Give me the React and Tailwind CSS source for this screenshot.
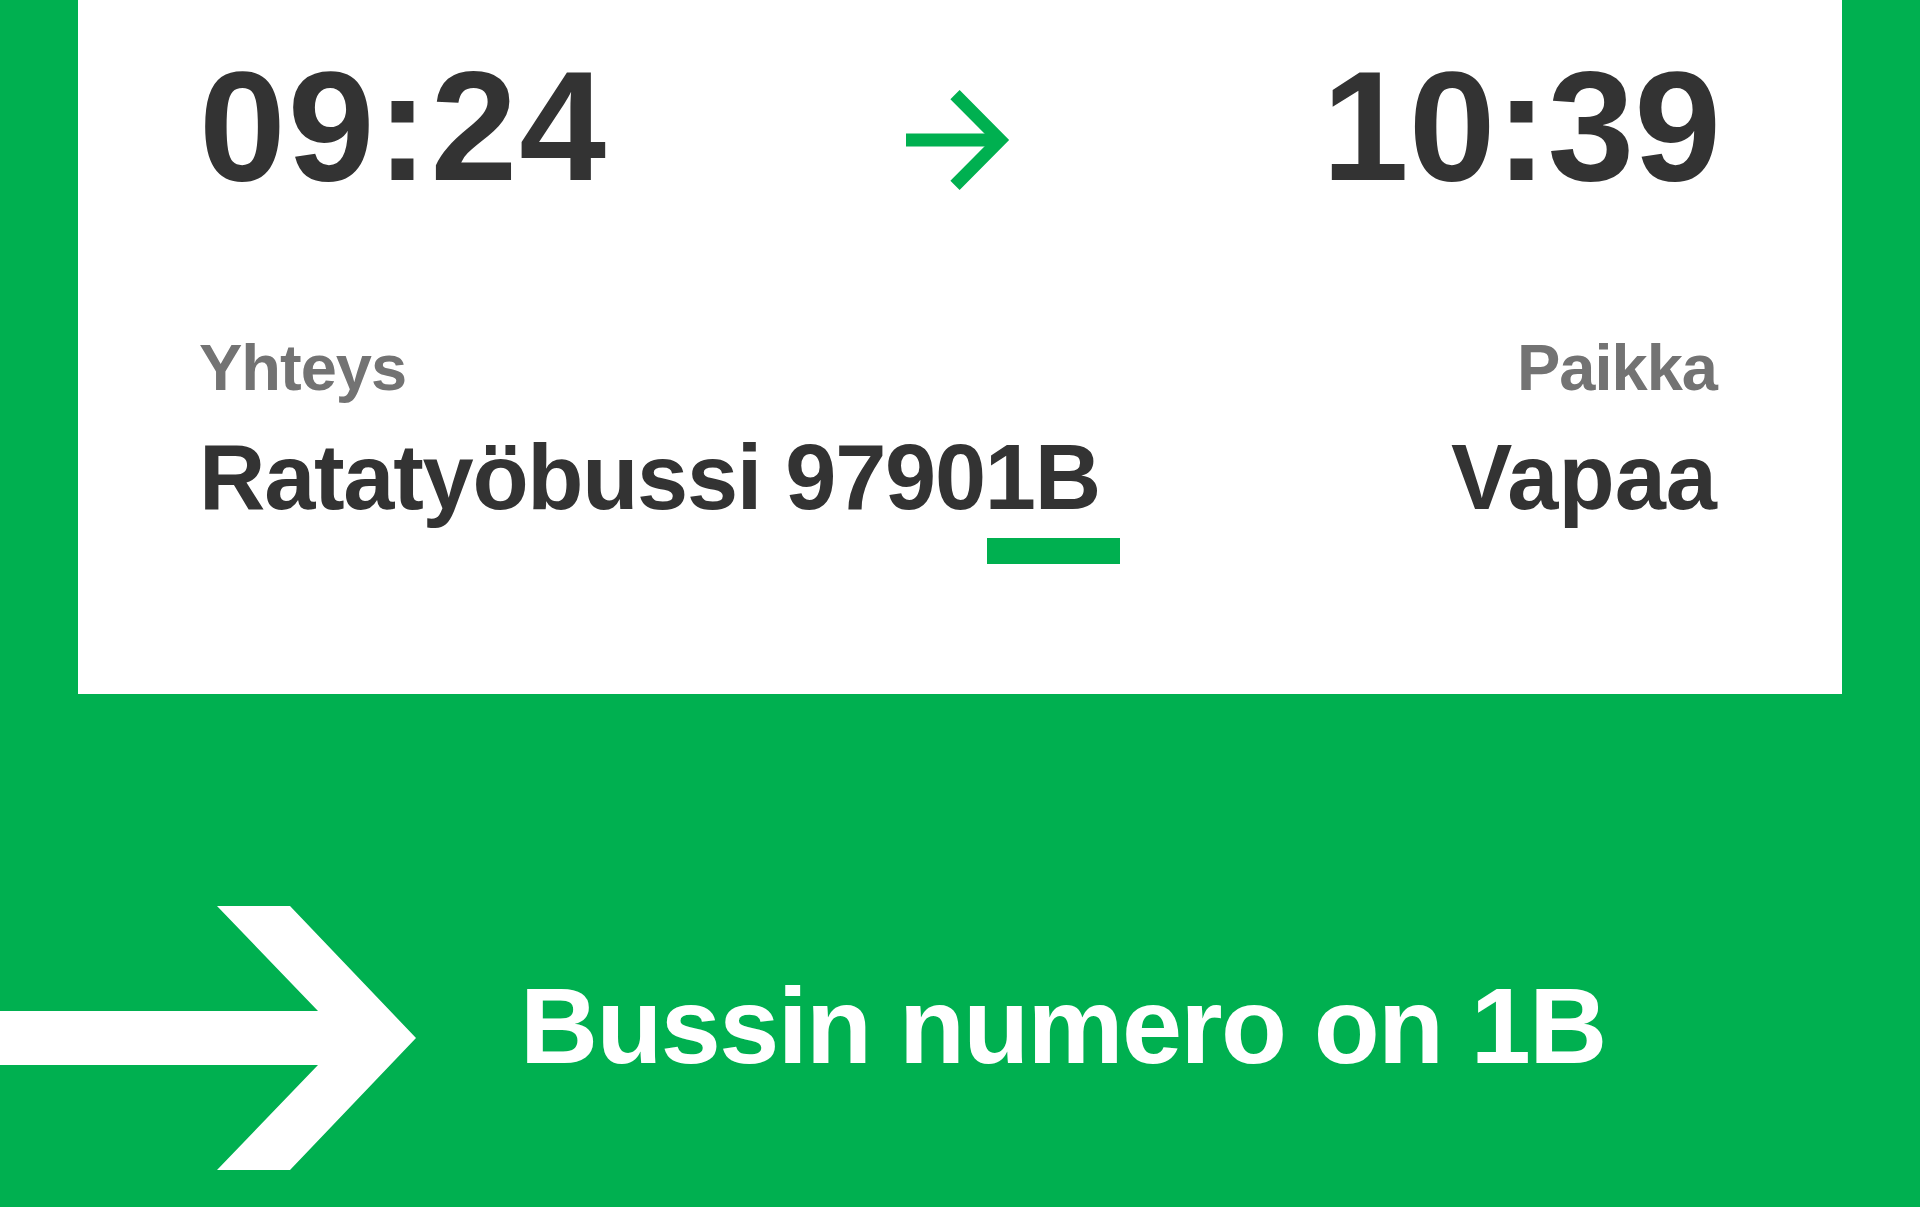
export default function App() {
  return (
    <div className="min-h-screen w-full overflow-hidden bg-[#00b050] font-['Liberation_Sans',Arial,sans-serif]">
      <section className="mx-[78px] h-[694px] bg-white px-[121px] pt-[48px]">
        <div className="grid grid-cols-[1fr_auto_1fr] items-start">
          <p className="text-[156px] font-bold leading-none tracking-[2px] text-[#333333]">09:24</p>
          <svg className="mr-[5px] mt-[42px] h-[100px] w-[104px]" viewBox="0 0 104 100" fill="none" stroke="#00b050" strokeWidth="13">
            <path d="M0 50H96" />
            <path d="M49 4.6L94 50L49 95.4" strokeLinejoin="miter" />
          </svg>
          <p className="justify-self-end text-[156px] font-bold leading-none text-[#333333]">10:39</p>
        </div>

        <div className="mt-[131px] flex items-start justify-between">
          <div>
            <p className="text-[65px] font-bold leading-none tracking-[-1px] text-[#737373]">Yhteys</p>
            <p className="mt-[31px] text-[92px] font-bold leading-none tracking-[-1.3px] text-[#333333]">Ratatyöbussi 97901B</p>
            <div className="ml-[788px] mt-[15px] h-[26px] w-[133px] bg-[#00b050]" />
          </div>
          <div className="mr-[4px] text-right">
            <p className="text-[65px] font-bold leading-none tracking-[-1px] text-[#737373]">Paikka</p>
            <p className="mt-[31px] text-[92px] font-bold leading-none text-[#333333]">Vapaa</p>
          </div>
        </div>
      </section>

      <div className="mt-[212px] flex items-start">
        <svg className="h-[264px] w-[416px] shrink-0" viewBox="0 0 416 264" fill="#ffffff">
          <polygon points="0,105 318,105 217,0 290,0 416,132 290,264 217,264 318,159 0,159" />
        </svg>
        <p className="ml-[104px] mt-[66px] text-[108px] font-bold leading-none tracking-[-1.6px] text-white">Bussin numero on 1B</p>
      </div>
    </div>
  )
}
